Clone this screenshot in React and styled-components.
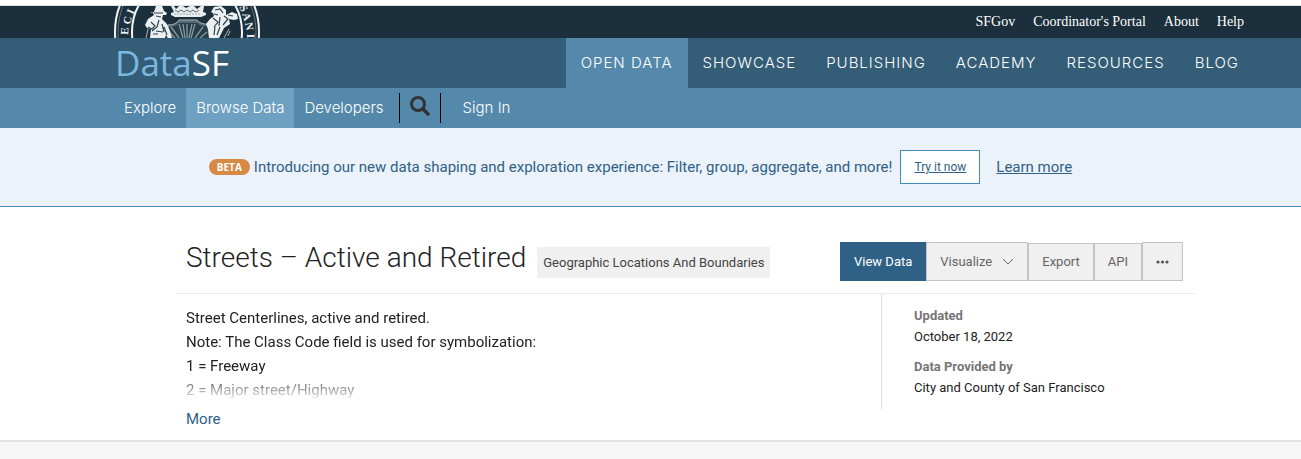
import React from "react";
import styled, { createGlobalStyle } from "styled-components";

const GlobalStyle = createGlobalStyle`
  *, *::before, *::after { box-sizing: border-box; }
  html { background: #f7f7f7; }
  body {
    margin: 0;
    font-family: Roboto, "Liberation Sans", sans-serif;
    font-size: 15px;
    line-height: 24px;
    color: #222;
  }
  a { color: inherit; text-decoration: none; }
`;

const brandFont = `Inter, "Open Sans", sans-serif`;

const Header = styled.header`
  border-top: 5px solid #fff;
  color: #fff;
`;

const TopBar = styled.div`
  display: flex;
  justify-content: space-between;
  height: 33px;
  padding: 0 57px 0 114px;
  border-top: 1px solid #dbe3e3;
  background: #1b2f3d;
`;

const UtilityLinks = styled.nav`
  display: flex;
  align-items: center;
  gap: 18px;
  font: 14px/32px "Liberation Serif", serif;
`;

const MainBar = styled.div`
  display: flex;
  justify-content: space-between;
  height: 50px;
  padding: 0 47px 0 115px;
  background: #345d77;
`;

const Logo = styled.a`
  font: 400 35px/50px "Open Sans", sans-serif;
  color: #7cb7e0;
`;

const LogoAccent = styled.span`
  color: #fff;
`;

const MainNav = styled.nav`
  display: flex;
`;

const MainLink = styled.a`
  padding: 0 15px;
  font: 300 15px/50px ${brandFont};
  letter-spacing: 1px;
  text-transform: uppercase;
  white-space: nowrap;
  background: ${(p) => (p.$active ? "#5489ac" : "transparent")};
`;

const SubNav = styled.nav`
  display: flex;
  align-items: center;
  height: 40px;
  padding-left: 114px;
  background: #5489ac;
`;

const SubLink = styled.a`
  padding: 0 10px;
  font: 300 15px/40px ${brandFont};
  white-space: nowrap;
  background: ${(p) => (p.$active ? "#6ea0c2" : "transparent")};
`;

const SearchButton = styled.button`
  display: flex;
  justify-content: center;
  width: 42px;
  height: 30px;
  margin: 0 12px 0 5px;
  padding: 3px 0 0;
  border: solid #000;
  border-width: 0 1px;
  background: none;
`;

const Banner = styled.section`
  display: flex;
  align-items: center;
  justify-content: center;
  height: 79px;
  padding-right: 20px;
  border-bottom: 1px solid #428bbd;
  background: #ebf2fa;
  color: #2f6186;
`;

const Beta = styled.span`
  margin-right: 4px;
  padding: 0 8px;
  border-radius: 8px;
  background: #d68a45;
  color: #fff;
  font: 700 10px/16px "Open Sans", sans-serif;
`;

const TryLink = styled.a`
  margin: 0 16px 0 8px;
  padding: 0 13px;
  border: 1px solid #428bbd;
  background: #fff;
  font-size: 12px;
  line-height: 32px;
  text-decoration: underline;
`;

const LearnLink = styled.a`
  text-decoration: underline;
`;

const Dataset = styled.main`
  padding: 35px 106px 9px 176px;
  border-bottom: 2px solid #e3e3e3;
  background: #fff;
`;

const TitleRow = styled.div`
  display: flex;
  align-items: flex-start;
  justify-content: space-between;
  height: 52px;
  padding: 0 12px 0 10px;
  border-bottom: 1px solid #ebebeb;
`;

const TitleGroup = styled.div`
  display: flex;
  align-items: baseline;
  gap: 11px;
`;

const Title = styled.h1`
  margin: 0;
  font-size: 28px;
  font-weight: 300;
  line-height: 32px;
`;

const Category = styled.a`
  padding: 0 6px;
  background: #f0f0f0;
  color: #444;
  font-size: 13px;
  line-height: 31px;
`;

const Actions = styled.div`
  display: flex;
  align-items: flex-end;
`;

const ActionButton = styled.button`
  display: flex;
  align-items: center;
  gap: 10px;
  height: ${(p) => (p.$short ? 38 : 39)}px;
  padding: 0 13px;
  border: 1px solid ${(p) => (p.$primary ? "#2f6186" : "#c4c4c4")};
  background: ${(p) => (p.$primary ? "#2f6186" : "#f0f0f0")};
  color: ${(p) => (p.$primary ? "#fff" : "#666")};
  font: 13px/24px Roboto, sans-serif;
`;

const Details = styled.div`
  display: flex;
`;

const Description = styled.div`
  flex: 1;
  padding: 12px 10px 0;
`;

const DescriptionText = styled.div`
  height: 96px;
  overflow: hidden;
  mask-image: linear-gradient(#000 66px, transparent 96px);
`;

const Paragraph = styled.p`
  margin: 0;
`;

const MoreButton = styled.button`
  display: block;
  margin-top: 5px;
  padding: 0;
  border: 0;
  background: none;
  color: #2f6186;
  font: 15px/24px Roboto, sans-serif;
`;

const Metadata = styled.dl`
  width: 314px;
  height: 115px;
  margin: 0;
  padding: 11px 0 0 32px;
  border-left: 1px solid #dedede;
  font-size: 13px;
  line-height: 21px;
`;

const Term = styled.dt`
  color: #767676;
  font-weight: 700;
`;

const Value = styled.dd`
  margin: 0 0 9px;
`;

const sealLetters = [
  ["E", 128, 35, -86],
  ["C", 130, 25, -76],
  ["I", 133, 15, -66],
  ["S", 239, 7, 64],
  ["A", 242, 14, 71],
  ["N", 245, 23, 80],
  ["I", 247, 34, 88],
];

function Seal() {
  return (
    <svg width="146" height="32" viewBox="114 6 146 32" role="img" aria-label="City seal">
      <g fill="none" stroke="#f1f4f4">
        <circle cx="187" cy="32" r="72" strokeWidth="2" />
        <circle cx="187" cy="32" r="69" strokeWidth="1" strokeOpacity=".35" />
        <circle cx="187" cy="32" r="55" strokeWidth="2" />
      </g>
      <g fill="#f1f4f4" fontFamily="Liberation Serif, serif" fontSize="11" fontWeight="700">
        {sealLetters.map(([letter, x, y, angle]) => (
          <text key={`${letter}${x}`} transform={`translate(${x} ${y}) rotate(${angle})`}>
            {letter}
          </text>
        ))}
      </g>
      {/* crest behind the shield */}
      <path d="M171 6h3l2 3 3-3h4l3 2 4-2h4l3 3 4-3h3l-1 6 3 1v2l-5 2h-26l-4-2v-2l3-1z" fill="#e9eded" />
      <path d="M175 10l3 2 3-2 3 2 3-2 3 2 3-2 3 2 3-2" stroke="#566a74" fill="none" />
      <path d="M174 14h26" stroke="#9caab0" strokeDasharray="2 1" />
      {/* shield with a sunburst */}
      <path d="M168 25q8 0 11-5h18q4 5 12 4l3 14h-44z" fill="#526872" stroke="#a7b4b8" />
      <path d="M168 27q8 0 11-4h18q4 4 10 3l2 12h-39z" fill="#263d4a" />
      <g stroke="#8799a1" strokeWidth="1.3">
        <path d="M187 38V24M183 38l-4-14M179 38l-8-11M191 38l4-14M195 38l8-11M175 38l-5-5M200 38l7-6M185 38l-2-14M189 38l3-14" />
      </g>
      {/* miner on the left */}
      <path d="M151 13l3-1 2-6h6l2 5 3 2-1 2h-3l-1 4 5 5 3 7 2 7h-4l-2-3-1 3h-15l1-9-4-1-2-3 3-6 6-4-1-2-2-1z" fill="#edf0f0" />
      <path d="M154 13h9M156 16l5 1M151 22l4 4-3 3-4-2M159 20l-2 7-5 4M162 24l2 8M156 31l7 1M164 27l3 8M153 34h5" stroke="#2b424f" strokeWidth="1.2" fill="none" />
      {/* sailor on the right */}
      <path d="M211 12l3-5 7-1 5 4v5l6-3 5 2 1 5-4 1-5-1 1 5-6 4-5 10h-10l-1-9-2-5 4-5 4-3-1-3z" fill="#edf0f0" />
      <path d="M215 10l5-1 3 4M214 14l4 1M213 18l5 4-4 5M220 17l-1 9M224 16l4 3-5 6M228 15l5 1M215 27l-1 8M220 27l-3 8" stroke="#2b424f" strokeWidth="1.2" fill="none" />
      <path d="M146 38l2-9M224 38l5-9M228 36l2-5" stroke="#a6b4b9" fill="none" />
    </svg>
  );
}

const mainLinks = ["Open Data", "Showcase", "Publishing", "Academy", "Resources", "Blog"];
const utilityLinks = ["SFGov", "Coordinator's Portal", "About", "Help"];

export default function App() {
  return (
    <>
      <GlobalStyle />
      <Header>
        <TopBar>
          <Seal />
          <UtilityLinks>
            {utilityLinks.map((label) => (
              <a href="#" key={label}>{label}</a>
            ))}
          </UtilityLinks>
        </TopBar>
        <MainBar>
          <Logo href="#">Data<LogoAccent>SF</LogoAccent></Logo>
          <MainNav>
            {mainLinks.map((label, i) => (
              <MainLink href="#" key={label} $active={i === 0}>{label}</MainLink>
            ))}
          </MainNav>
        </MainBar>
        <SubNav>
          <SubLink href="#">Explore</SubLink>
          <SubLink href="#" $active>Browse Data</SubLink>
          <SubLink href="#">Developers</SubLink>
          <SearchButton aria-label="Search">
            <svg width="20" height="20" viewBox="0 0 20 20" fill="none" stroke="#333">
              <circle cx="8" cy="8" r="6.5" strokeWidth="3" />
              <path d="M13 13l5 5" strokeWidth="3.5" strokeLinecap="round" />
            </svg>
          </SearchButton>
          <SubLink href="#">Sign In</SubLink>
        </SubNav>
      </Header>
      <Banner>
        <Beta>BETA</Beta>
        <span>Introducing our new data shaping and exploration experience: Filter, group, aggregate, and more!</span>
        <TryLink href="#">Try it now</TryLink>
        <LearnLink href="#">Learn more</LearnLink>
      </Banner>
      <Dataset>
        <TitleRow>
          <TitleGroup>
            <Title>Streets – Active and Retired</Title>
            <Category href="#">Geographic Locations And Boundaries</Category>
          </TitleGroup>
          <Actions>
            <ActionButton $primary>View Data</ActionButton>
            <ActionButton>
              Visualize
              <svg width="12" height="8" viewBox="0 0 12 8" fill="none" stroke="#666">
                <path d="M1 1l5 5 5-5" />
              </svg>
            </ActionButton>
            <ActionButton $short>Export</ActionButton>
            <ActionButton $short>API</ActionButton>
            <ActionButton aria-label="More actions">
              <svg width="13" height="4" viewBox="0 0 13 4" fill="#555">
                <circle cx="2" cy="2" r="1.6" />
                <circle cx="6.5" cy="2" r="1.6" />
                <circle cx="11" cy="2" r="1.6" />
              </svg>
            </ActionButton>
          </Actions>
        </TitleRow>
        <Details>
          <Description>
            <DescriptionText>
              <Paragraph>Street Centerlines, active and retired.</Paragraph>
              <Paragraph>Note: The Class Code field is used for symbolization:</Paragraph>
              <Paragraph>1 = Freeway</Paragraph>
              <Paragraph>2 = Major street/Highway</Paragraph>
            </DescriptionText>
            <MoreButton>More</MoreButton>
          </Description>
          <Metadata>
            <Term>Updated</Term>
            <Value>October 18, 2022</Value>
            <Term>Data Provided by</Term>
            <Value>City and County of San Francisco</Value>
          </Metadata>
        </Details>
      </Dataset>
    </>
  );
}
